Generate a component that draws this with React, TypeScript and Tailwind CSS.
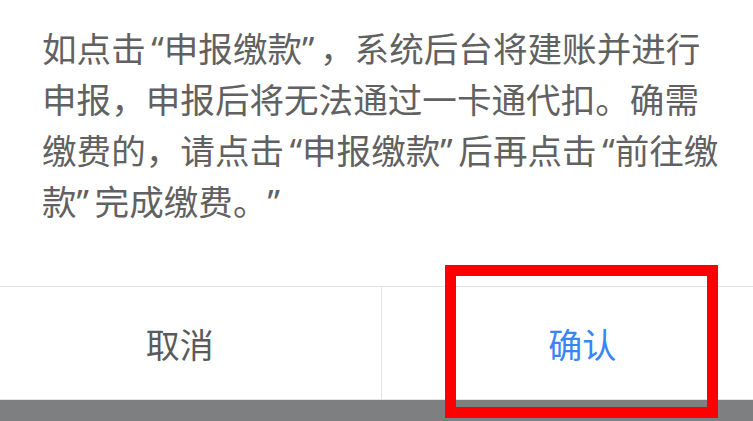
function Lq() {
  return <span className="inline-block w-[18px] text-right leading-none font-['Noto_Sans']">“</span>;
}

function Rq() {
  return <span className="inline-block w-[18px] text-left leading-none font-['Noto_Sans']">”</span>;
}

export default function App() {
  return (
    <div
      className="relative h-[421px] w-[753px] overflow-hidden bg-white"
      style={{ fontFamily: '"Noto Sans CJK SC", "Noto Sans", sans-serif' }}
    >
      {/* message body */}
      <p className="pl-[42px] pr-[10px] pt-[22px] pb-[60px] text-[34.6px] leading-[51px] text-[#616161] whitespace-nowrap">
        如点击<Lq />申报缴款<Rq />，系统后台将建账并进行
        <br />
        申报，申报后将无法通过一卡通代扣。确需
        <br />
        缴费的，请点击<Lq />申报缴款<Rq />后再点击<Lq />前往缴
        <br />
        款<Rq />完成缴费。<Rq />
      </p>

      {/* action buttons (dialog is wider than the crop) */}
      <div className="ml-[-21px] flex h-[114px] w-[804px] border-y border-[#e3e3e3]">
        <button className="flex-1 text-[34px] text-[#5a5a5a]">取消</button>
        <button className="flex-1 border-l border-[#e3e3e3] text-[34px] text-[#3785f6]">确认</button>
      </div>
      <div className="h-[22px] bg-[#7e7f81]" />

      {/* red annotation box */}
      <div className="absolute left-[445px] top-[265px] h-[153px] w-[273px] border-[11px] border-[#ff0000]" />
    </div>
  );
}
